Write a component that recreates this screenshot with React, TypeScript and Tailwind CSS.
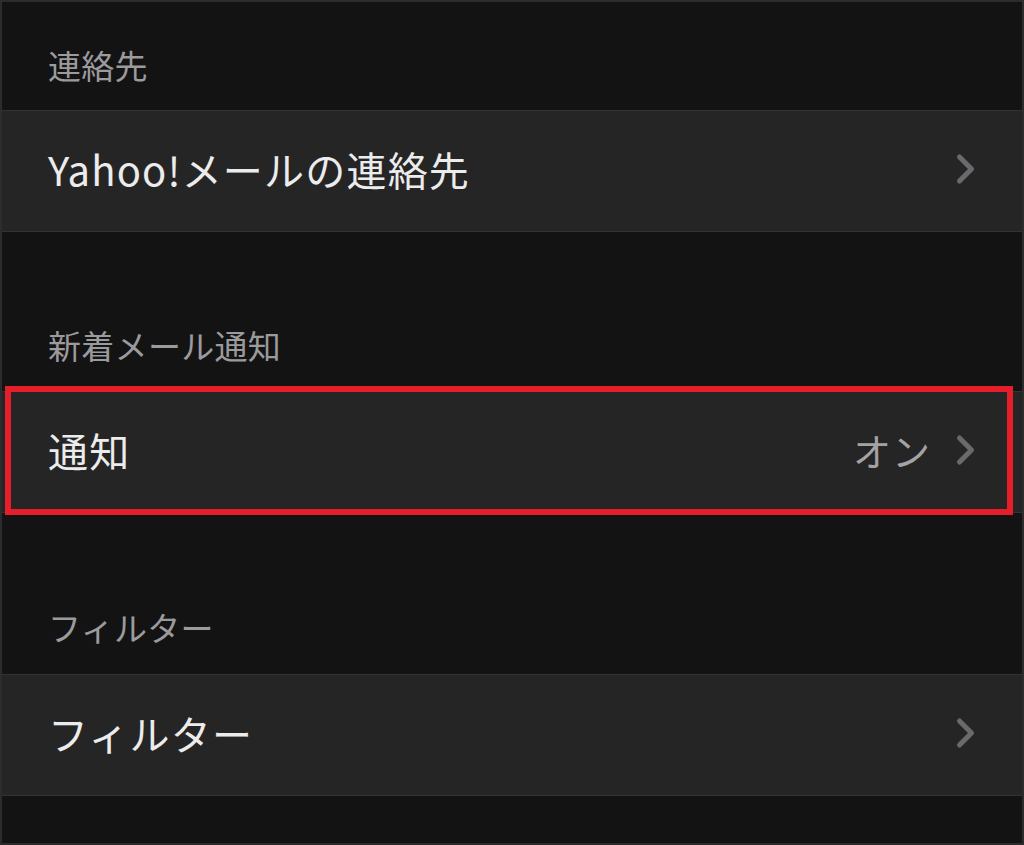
import React from "react";

const jp = { fontFamily: '"Noto Sans CJK JP", "Noto Sans", sans-serif' };

const Chevron = () => (
  <svg width="22" height="34" viewBox="0 0 22 34" fill="none" className="shrink-0">
    <path d="M4.5 5 L16.5 17 L4.5 29" stroke="#6a696b" strokeWidth="5" strokeLinecap="round" strokeLinejoin="round" />
  </svg>
);

const SectionHeader = ({ label, className }: { label: string; className: string }) => (
  <div className={`pl-[46px] ${className}`}>
    <span className="block text-[33px] leading-none tracking-[0.3px] text-[#9b9a9c]">{label}</span>
  </div>
);

const Row = ({ label, value, highlight }: { label: string; value?: string; highlight?: boolean }) => (
  <div className="relative flex h-[122px] items-center border-y border-[#333234] bg-[#262526] pb-[4px] pl-[46px] pr-[45px]">
    <span className="flex-1 text-[40px] leading-none tracking-[1.2px] text-[#ececec]">{label}</span>
    {value && <span className="mr-[24px] text-[38px] leading-none tracking-[1px] text-[#a3a2a4]">{value}</span>}
    <Chevron />
    {highlight && (
      <div className="absolute -top-[6px] left-[3px] right-[9px] -bottom-[3px] border-[6px] border-[#e61e2a]" />
    )}
  </div>
);

export default function App() {
  return (
    <div style={jp} className="h-[845px] w-[1024px] overflow-hidden border-2 border-[#2c2b2d] bg-[#141314]">
      <SectionHeader label="連絡先" className="h-[108px] pt-[47px]" />
      <Row label="Yahoo!メールの連絡先" />
      <SectionHeader label="新着メール通知" className="h-[159px] pt-[97px]" />
      <Row label="通知" value="オン" highlight />
      <SectionHeader label="フィルター" className="h-[161px] pt-[98px]" />
      <Row label="フィルター" />
    </div>
  );
}
